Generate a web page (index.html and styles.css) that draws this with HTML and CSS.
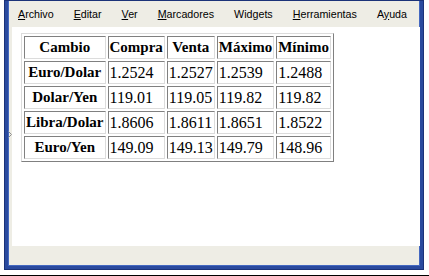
FILE: index.html
```html
<!DOCTYPE html>
<html lang="es">
<head>
    <meta charset="UTF-8">
    <title>Cambio</title>
    <link rel="stylesheet" href="styles.css">
</head>
<body>
    <div class="screen">
        <div class="window">
            <ul class="menubar">
                <li><u>A</u>rchivo</li>
                <li><u>E</u>ditar</li>
                <li><u>V</u>er</li>
                <li><u>M</u>arcadores</li>
                <li>Wid<u>g</u>ets</li>
                <li><u>H</u>erramientas</li>
                <li>A<u>y</u>uda</li>
            </ul>
            <div class="main">
                <div class="sidebar">
                    <svg class="grippy" width="4" height="7" viewBox="0 0 4 7">
                        <path d="M0.5 0.5 L3.5 3.5 L0.5 6.5" fill="none" stroke="#8e8e8e" stroke-width="1"/>
                    </svg>
                </div>
                <div class="content">
                    <table class="rates">
                        <tr>
                            <th>Cambio</th>
                            <th>Compra</th>
                            <th>Venta</th>
                            <th>Máximo</th>
                            <th>Mínimo</th>
                        </tr>
                        <tr>
                            <th>Euro/Dolar</th>
                            <td>1.2524</td>
                            <td>1.2527</td>
                            <td>1.2539</td>
                            <td>1.2488</td>
                        </tr>
                        <tr>
                            <th>Dolar/Yen</th>
                            <td>119.01</td>
                            <td>119.05</td>
                            <td>119.82</td>
                            <td>119.82</td>
                        </tr>
                        <tr>
                            <th>Libra/Dolar</th>
                            <td>1.8606</td>
                            <td>1.8611</td>
                            <td>1.8651</td>
                            <td>1.8522</td>
                        </tr>
                        <tr>
                            <th>Euro/Yen</th>
                            <td>149.09</td>
                            <td>149.13</td>
                            <td>149.79</td>
                            <td>148.96</td>
                        </tr>
                    </table>
                </div>
            </div>
            <div class="statusbar"></div>
        </div>
    </div>
</body>
</html>
```

FILE: styles.css
```css
body {
    margin: 0;
    background-color: #fff;
}
.screen {
    width: 427px;
    height: 275px;
    border-right: 1px solid #000;
    border-bottom: 1px solid #000;
    padding-left: 4px;
    box-sizing: content-box;
    background-color: #fff;
}
.window {
    width: 412px;
    height: 266px;
    border: 4px solid #2a4a9e;
    border-top: 0;
    box-shadow: inset 1px 0 0 #4468c0, inset -1px 0 0 #4468c0, inset 0 -1px 0 #4468c0;
    background-color: #eeede5;
    display: flex;
    flex-direction: column;
    box-sizing: content-box;
    outline: 1px solid #1b3278;
    outline-offset: -1px;
}
.menubar {
    list-style: none;
    margin: 0;
    padding: 0;
    height: 27px;
    display: flex;
    align-items: center;
    font-family: "Liberation Sans", Arial, sans-serif;
    font-size: 10.7px;
    color: #000;
}
.menubar li {
    padding: 0 10px;
    line-height: 13px;
    margin-top: 1px;
    white-space: nowrap;
}
.main {
    display: flex;
    height: 219px;
}
.sidebar {
    width: 4px;
    position: relative;
}
.grippy {
    position: absolute;
    left: 0;
    top: 104px;
}
.content {
    flex: 1;
    background-color: #fff;
    padding: 6px 9px;
}
.statusbar {
    flex: 1;
}
.rates {
    font-family: "Liberation Serif", "Times New Roman", serif;
    font-size: 16px;
    color: #000;
    border: 1px solid;
    border-color: #dcdcdc #808080 #808080 #dcdcdc;
    border-spacing: 2px;
}
.rates th,
.rates td {
    border: 1px solid;
    border-color: #808080 #dcdcdc #dcdcdc #808080;
    padding: 1px;
    height: 19px;
}
.rates th {
    font-size: 15px;
    font-weight: bold;
    text-align: center;
}
.rates td {
    text-align: left;
}
```
